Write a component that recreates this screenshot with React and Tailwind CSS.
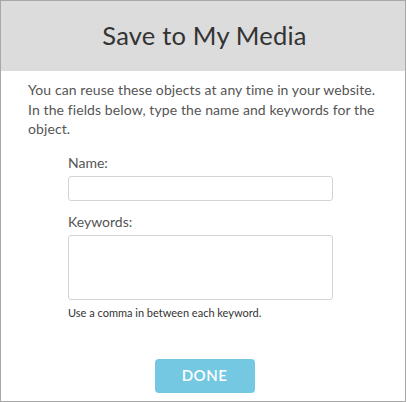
export default function App() {
  return (
    <div className="w-[407px] h-[402px] bg-white">
      <div className="w-[406px] h-[402px] border border-[#a8a8a8] flex flex-col bg-white" style={{ fontFamily: 'Lato, "Open Sans", sans-serif' }}>
        <div className="h-[70px] bg-[#dcdcdc] flex items-center justify-center shrink-0">
          <h1 className="text-[25.5px] text-[#333] tracking-[0.2px] pb-[1px] pl-[3px]">Save to My Media</h1>
        </div>
        <p className="px-[27px] pt-[9px] text-[14px] leading-[19.5px] text-[#555] tracking-[0.1px]">
          You can reuse these objects at any time in your website. In the fields below, type the name and keywords for the object.
        </p>
        <div className="pl-[67px] pr-[72px] pt-[15px] flex flex-col">
          <label className="text-[14px] leading-[18px] text-[#555]">Name:</label>
          <div className="mt-[4px] h-[25px] border border-[#d4d4d4] rounded-[3px]"></div>
          <label className="mt-[12px] text-[14px] leading-[18px] text-[#555]">Keywords:</label>
          <div className="mt-[4px] h-[65px] border border-[#d4d4d4] rounded-[3px]"></div>
          <p className="mt-[5px] text-[11px] leading-[15px] text-[#333]">Use a comma in between each keyword.</p>
        </div>
        <div className="flex justify-center pt-[39px] pl-[3px]">
          <button className="w-[100px] h-[34px] rounded-[4px] bg-[#74c8e2] text-white text-[15px] font-semibold tracking-[0.5px]">DONE</button>
        </div>
      </div>
    </div>
  );
}
